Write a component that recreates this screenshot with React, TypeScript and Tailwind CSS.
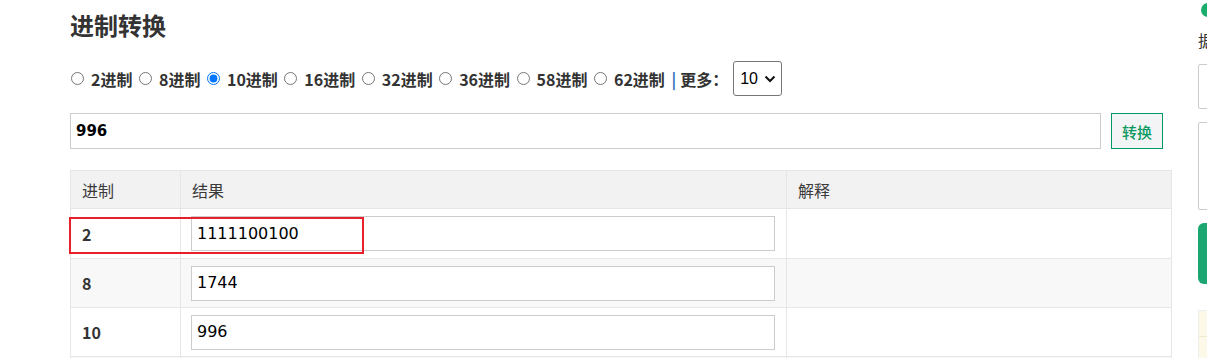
import React from "react";

const cjk = { fontFamily: '"Noto Sans CJK SC", "Noto Sans", sans-serif' };
const mono = { fontFamily: '"DejaVu Sans", Verdana, sans-serif' };

const bases = ["2", "8", "10", "16", "32", "36", "58", "62"];

const rows = [
  { b: "2", v: "1111100100" },
  { b: "8", v: "1744" },
  { b: "10", v: "996" },
];

export default function App() {
  return (
    <div className="relative w-[1207px] h-[358px] overflow-hidden bg-white text-[#333]" style={cjk}>
      <div className="flex">
        {/* main column */}
        <div className="ml-[70px] w-[1101px] shrink-0">
          <h1 className="mt-[8px] text-[24px] leading-[34px] font-bold text-[#333]">进制转换</h1>

          <div className="mt-[19px] flex items-center h-[35px] text-[16px] font-bold">
            {bases.map((b, i) => (
              <label key={b} className={"flex items-center " + (i === 0 ? "ml-[1px]" : "")}>
                <input
                  type="radio"
                  name="base"
                  readOnly
                  checked={b === "10"}
                  className="m-0 w-[13px] h-[13px]"
                />
                <span className="ml-[7px] mr-[6.5px] leading-[20px]">{b}进制</span>
              </label>
            ))}
            <span className="text-[#2a6ebb]">|</span>
            <span className="ml-[4px]">更多：</span>
            <div className="ml-[5px] flex items-center h-[35px] w-[49px] border border-[#767676] rounded-[3px] bg-white pl-[6px] font-normal text-black">
              <span className="text-[16px]" style={{ fontFamily: '"Liberation Sans", Arial, sans-serif' }}>10</span>
              <svg className="ml-[6px]" width="12" height="8" viewBox="0 0 12 8">
                <path d="M1.5 1.5 L6 6 L10.5 1.5" fill="none" stroke="#111" strokeWidth="2" />
              </svg>
            </div>
          </div>

          <div className="mt-[17px] flex items-center">
            <div className="w-[1031px] h-[36px] border border-[#ccc] flex items-center pl-[5px] text-[15px] font-bold text-black" style={mono}>
              996
            </div>
            <button className="ml-[10px] w-[52px] h-[36px] border border-[#009966] bg-[#f2f4f5] text-[#0a9960] text-[15px] font-medium leading-none">
              转换
            </button>
          </div>

          <table className="mt-[21px] w-[1101px] border-collapse table-fixed text-[16px]">
            <colgroup>
              <col className="w-[110px]" />
              <col className="w-[606px]" />
              <col className="w-[385px]" />
            </colgroup>
            <thead>
              <tr className="bg-[#f2f2f2] h-[38px]">
                <th className="border border-[#e6e6e6] text-left font-normal pl-[11px] text-[#3a3a3a]">进制</th>
                <th className="border border-[#e6e6e6] text-left font-normal pl-[11px] text-[#3a3a3a]">结果</th>
                <th className="border border-[#e6e6e6] text-left font-normal pl-[11px] text-[#3a3a3a]">解释</th>
              </tr>
            </thead>
            <tbody>
              {rows.map((r, i) => (
                <tr key={r.b} className={i === 1 ? "bg-[#f8f8f8]" : "bg-white"}>
                  <td className={"border border-[#e6e6e6] pl-[11px] font-bold text-[#333] " + (i === 0 ? "h-[50px]" : "h-[49px]")}>{r.b}</td>
                  <td className="border border-[#e6e6e6] pl-[10px] pr-[11px]">
                    <div className="h-[35px] border border-[#ccc] bg-white flex items-center pl-[5px] text-[16px] text-black" style={mono}>
                      {r.v}
                    </div>
                  </td>
                  <td className="border border-[#e6e6e6]"></td>
                </tr>
              ))}
              <tr className="bg-[#f8f8f8] h-[49px]">
                <td className="border border-[#e6e6e6]"></td>
                <td className="border border-[#e6e6e6]"></td>
                <td className="border border-[#e6e6e6]"></td>
              </tr>
            </tbody>
          </table>
        </div>

        {/* right column (clipped) */}
        <div className="ml-[27px] w-[300px] shrink-0">
          <div className="mt-[3px] ml-[3px] w-[14px] h-[14px] rounded-full bg-[#1aad6e]" />
          <div className="mt-[13px] text-[16px] leading-[20px] text-[#333]">据统计</div>
          <div className="mt-[14px] h-[45px] border border-[#ccc] rounded-[2px]" />
          <div className="mt-[13px] h-[88px] border border-[#ccc] rounded-[2px]" />
          <div className="mt-[13px] h-[61px] rounded-[6px] bg-[#1ba672]" />
          <div className="mt-[26px] h-[60px] border border-[#eee] bg-[#fdf9e8]">
            <div className="h-[26px] border-b border-[#f0ead0]" />
          </div>
        </div>
      </div>

      {/* annotation overlay */}
      <div className="absolute left-[69px] top-[217px] w-[295px] h-[37px] border-2 border-[#e8202a] pointer-events-none" />
    </div>
  );
}
